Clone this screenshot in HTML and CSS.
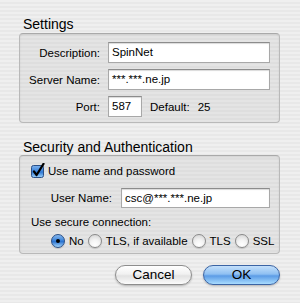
FILE: index.html
```html
<!DOCTYPE html>
<html lang="en">
<head>
    <meta charset="UTF-8">
    <title>Account Settings</title>
    <link rel="stylesheet" href="styles.css">
</head>
<body>
    <div class="sheet">
        <h2 class="group-title">Settings</h2>
        <div class="group settings">
            <span class="label">Description:</span>
            <div class="text-field">SpinNet</div>

            <span class="label">Server Name:</span>
            <div class="text-field">***.***.ne.jp</div>

            <span class="label">Port:</span>
            <div class="port-row">
                <div class="text-field port">587</div>
                <span class="default-label">Default:</span>
                <span class="default-value">25</span>
            </div>
        </div>

        <h2 class="group-title second">Security and Authentication</h2>
        <div class="group security">
            <div class="check-row">
                <svg class="checkbox" width="14" height="15" viewBox="0 0 14 15">
                    <defs>
                        <linearGradient id="cbFill" x1="0" y1="0" x2="0" y2="1">
                            <stop offset="0" stop-color="#7fb2ec"/>
                            <stop offset="0.45" stop-color="#3f86dc"/>
                            <stop offset="0.55" stop-color="#2f78d4"/>
                            <stop offset="1" stop-color="#9fd4fb"/>
                        </linearGradient>
                    </defs>
                    <rect x="0.5" y="2.5" width="12" height="12" rx="2" fill="url(#cbFill)" stroke="#2a4f86"/>
                    <path d="M3 8.5 L5.6 12 L12.5 0.8" fill="none" stroke="#000" stroke-width="2.2" stroke-linecap="round" stroke-linejoin="round"/>
                </svg>
                <span>Use name and password</span>
            </div>

            <div class="user-row">
                <span class="label">User Name:</span>
                <div class="text-field">csc@***.***.ne.jp</div>
            </div>

            <div class="secure-label">Use secure connection:</div>

            <div class="radio-row">
                <label class="option">
                    <span class="radio on"></span>
                    <span>No</span>
                </label>
                <label class="option">
                    <span class="radio"></span>
                    <span>TLS, if available</span>
                </label>
                <label class="option">
                    <span class="radio"></span>
                    <span>TLS</span>
                </label>
                <label class="option">
                    <span class="radio"></span>
                    <span>SSL</span>
                </label>
            </div>
        </div>

        <div class="buttons">
            <button class="push-button">Cancel</button>
            <button class="push-button default">OK</button>
        </div>
    </div>
</body>
</html>
```

FILE: styles.css
```css
body {
    margin: 0;
    padding: 0;
    font-family: "Liberation Sans", Arial, sans-serif;
    font-size: 11.5px;
    color: #000;
    background-color: #ececec;
    background-image: repeating-linear-gradient(#efefef 0, #efefef 2px, #e8e8e8 2px, #e8e8e8 4px);
    width: 300px;
    height: 303px;
    overflow: hidden;
}

.sheet {
    padding: 16px 20px 0 19px;
}

.group-title {
    margin: 0 0 1px 4px;
    font-size: 14px;
    font-weight: normal;
    line-height: 16px;
}

.group-title.second {
    margin-top: 16px;
    margin-bottom: 0;
}

.group {
    border: 1px solid #b9b9b9;
    border-top-color: #a9a9a9;
    border-radius: 4px;
    background-color: rgba(0, 0, 0, 0.045);
    box-shadow: inset 0 1px 2px rgba(0, 0, 0, 0.08);
}

.settings {
    display: grid;
    grid-template-columns: 80px 1fr;
    column-gap: 8px;
    row-gap: 6px;
    align-items: center;
    padding: 8px 9px 5px 0;
}

.label {
    text-align: right;
    line-height: 14px;
}

.text-field {
    height: 21px;
    box-sizing: border-box;
    background: #fff;
    border: 1px solid #a8a8a8;
    border-top-color: #8c8c8c;
    box-shadow: inset 0 1px 1px rgba(0, 0, 0, 0.15);
    padding: 0 3px;
    line-height: 19px;
    white-space: nowrap;
    overflow: hidden;
}

.port-row {
    display: flex;
    align-items: center;
}

.text-field.port {
    width: 34px;
}

.default-label {
    margin-left: 8px;
}

.default-value {
    margin-left: 8px;
}

.security {
    padding: 9px 9px 5px 11px;
}

.check-row {
    display: flex;
    align-items: flex-end;
    gap: 3px;
    height: 15px;
    margin-top: -2px;
    line-height: 14px;
}

.checkbox {
    display: block;
}

.user-row {
    display: flex;
    align-items: center;
    margin-top: 10px;
}

.user-row .label {
    width: 81px;
    margin-right: 9px;
}

.user-row .text-field {
    flex: 1;
    height: 20px;
    line-height: 18px;
}

.secure-label {
    margin-top: 7px;
    line-height: 14px;
}

.radio-row {
    display: flex;
    align-items: center;
    gap: 4px;
    margin: 5px -9px 0 0;
    padding-left: 20px;
    line-height: 14px;
    white-space: nowrap;
}

.option {
    display: flex;
    flex-shrink: 0;
    align-items: center;
    gap: 4px;
}

.radio {
    position: relative;
    width: 14px;
    height: 14px;
    box-sizing: border-box;
    border-radius: 50%;
    border: 1px solid #8a8a8a;
    background: radial-gradient(circle at 50% 80%, #ffffff 0, #f4f4f4 40%, #cfcfcf 100%);
    box-shadow: 0 1px 1px rgba(0, 0, 0, 0.15);
}

.radio.on {
    border-color: #2a4f86;
    background: linear-gradient(#86b8ee 0%, #3d84da 45%, #2c74d0 55%, #a6d6fb 100%);
}

.radio.on::after {
    content: "";
    position: absolute;
    left: 4px;
    top: 4px;
    width: 4px;
    height: 4px;
    border-radius: 50%;
    background: #000;
}

.buttons {
    display: flex;
    justify-content: flex-end;
    gap: 11px;
    margin-top: 11px;
}

.push-button {
    width: 77px;
    height: 20px;
    padding: 0;
    font-family: "Liberation Sans", Arial, sans-serif;
    font-size: 13.5px;
    line-height: 18px;
    color: #000;
    border: 1px solid #8d8d8d;
    border-radius: 10px;
    background: linear-gradient(#ffffff 0%, #f1f1f1 45%, #e2e2e2 55%, #fbfbfb 100%);
    box-shadow: 0 1px 2px rgba(0, 0, 0, 0.25);
}

.push-button.default {
    border-color: #3b64a4;
    background: linear-gradient(#c4e0fb 0%, #8fc0f2 45%, #5c9ce6 55%, #a9dcff 100%);
}
```
